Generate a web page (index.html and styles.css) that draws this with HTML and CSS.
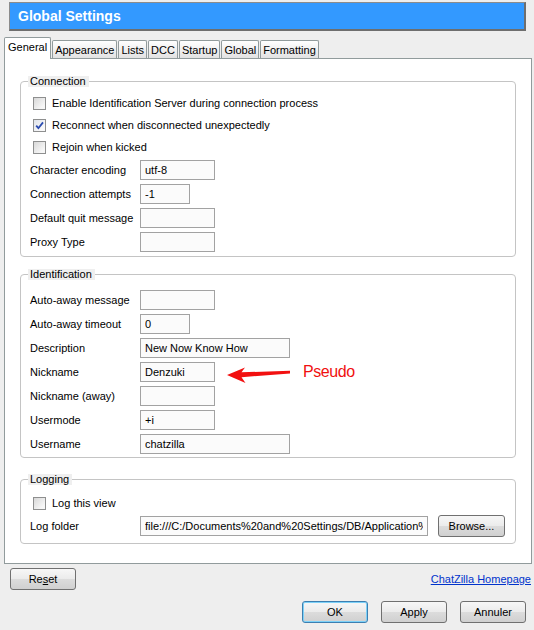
FILE: index.html
```html
<!DOCTYPE html>
<html lang="en">
<head>
  <meta charset="UTF-8" />
  <meta name="viewport" content="width=device-width, initial-scale=1.0" />
  <title>Global Settings</title>
  <link rel="stylesheet" href="styles.css">
</head>
<body>
  <div class="titlebar">Global Settings</div>

  <div class="tabs">
    <span class="tab active">General</span>
    <span class="tab">Appearance</span>
    <span class="tab">Lists</span>
    <span class="tab">DCC</span>
    <span class="tab">Startup</span>
    <span class="tab">Global</span>
    <span class="tab">Formatting</span>
  </div>

  <div class="panel">
    <fieldset class="group">
      <legend>Connection</legend>
      <div class="rows rows-connection">
        <label class="check"><span class="box"></span>Enable Identification Server during connection process</label>
        <label class="check">
          <span class="box checked">
            <svg width="9" height="9" viewBox="0 0 9 9"><path d="M1.2 4.6 L3.4 7.2 L8 1.4" fill="none" stroke="#2a4bb0" stroke-width="1.8"/></svg>
          </span>Reconnect when disconnected unexpectedly
        </label>
        <label class="check"><span class="box"></span>Rejoin when kicked</label>
        <div class="field"><span class="name">Character encoding</span><input class="text w75" value="utf-8"></div>
        <div class="field"><span class="name">Connection attempts</span><input class="text w50" value="-1"></div>
        <div class="field"><span class="name">Default quit message</span><input class="text w75" value=""></div>
        <div class="field"><span class="name">Proxy Type</span><input class="text w75" value=""></div>
      </div>
    </fieldset>

    <fieldset class="group group-ident">
      <legend>Identification</legend>
      <div class="rows rows-ident">
        <div class="field"><span class="name">Auto-away message</span><input class="text w75" value=""></div>
        <div class="field"><span class="name">Auto-away timeout</span><input class="text w50" value="0"></div>
        <div class="field"><span class="name">Description</span><input class="text w150" value="New Now Know How"></div>
        <div class="field nick">
          <span class="name">Nickname</span><input class="text w75" value="Denzuki">
          <!-- red callout pointing at the nickname box -->
          <svg class="arrow" width="64" height="18" viewBox="0 0 64 18">
            <path d="M0 9 L18 1.5 L14.5 6.3 L63 4.8 L63 7.6 L14.5 11.2 L18.5 17 Z" fill="#f21010"/>
          </svg>
          <span class="callout">Pseudo</span>
        </div>
        <div class="field"><span class="name">Nickname (away)</span><input class="text w75" value=""></div>
        <div class="field"><span class="name">Usermode</span><input class="text w75" value="+i"></div>
        <div class="field"><span class="name">Username</span><input class="text w150" value="chatzilla"></div>
      </div>
    </fieldset>

    <fieldset class="group group-log">
      <legend>Logging</legend>
      <div class="rows rows-log">
        <label class="check"><span class="box"></span>Log this view</label>
        <div class="field">
          <span class="name">Log folder</span>
          <input class="text w288" value="file:///C:/Documents%20and%20Settings/DB/Application%20Data/">
          <button class="btn browse">Browse...</button>
        </div>
      </div>
    </fieldset>
  </div>

  <div class="footer-top">
    <button class="btn">Re<u>s</u>et</button>
    <a class="home" href="#">ChatZilla Homepage</a>
  </div>

  <div class="actions">
    <button class="btn default">OK</button>
    <button class="btn">Apply</button>
    <button class="btn">Annuler</button>
  </div>
</body>
</html>
```

FILE: styles.css
```css
body {
  margin: 0;
  font-family: "Liberation Sans", Arial, sans-serif;
  font-size: 11px;
  background-color: #eeeeee;
  color: #000;
}

/* window header */
.titlebar {
  margin: 2px 8px 0 9px;
  height: 26px;
  padding-left: 8px;
  background-color: #3399ff;
  border: 1px solid #8c8c8c;
  border-right: 2px solid #6e6e6e;
  border-bottom: 2px solid #6e6e6e;
  color: #fff;
  font-size: 14px;
  font-weight: bold;
  line-height: 26px;
}

/* tab strip */
.tabs {
  display: flex;
  align-items: flex-end;
  height: 21px;
  margin: 6px 0 0 4px;
}

.tab {
  display: flex;
  align-items: center;
  box-sizing: border-box;
  height: 18px;
  padding: 0 2px;
  margin-right: 1px;
  border: 1px solid #919b9c;
  border-bottom: none;
  border-radius: 2px 2px 0 0;
  background: linear-gradient(#ffffff, #e2e2e2);
}

.tab.active {
  position: relative;
  z-index: 1;
  height: 22px;
  margin-bottom: -1px;
  padding: 0 3px 3px;
  background: #fff;
}

.panel {
  box-sizing: border-box;
  height: 506px;
  margin: 0 2px 0 4px;
  background-color: #fff;
  border: 1px solid #919b9c;
}

/* group boxes */
.group {
  margin: 17px 15px 0 15px;
  padding: 0;
  border: 1px solid #c4c4c4;
  border-radius: 4px;
}

.group legend {
  margin-left: 7px;
  padding: 0 3px 0 2px;
  line-height: 11px;
  background-color: #efefef;
}

.group-ident {
  margin-top: 12px;
}

.group-log {
  margin-top: 16px;
}

.rows {
  padding-left: 9px;
}

.rows-connection {
  padding-top: 5px;
  padding-bottom: 2px;
}

.rows-ident {
  padding-top: 8px;
  padding-bottom: 1px;
}

.rows-log {
  padding-top: 7px;
  padding-bottom: 5px;
}

.check {
  display: flex;
  align-items: center;
  height: 22px;
  padding-left: 3px;
}

.box {
  display: flex;
  align-items: center;
  justify-content: center;
  box-sizing: border-box;
  width: 13px;
  height: 13px;
  margin-right: 6px;
  border: 1px solid #8e8f8f;
  background: linear-gradient(135deg, #d8d8d8, #f7f7f7 80%);
}

.box.checked {
  background: linear-gradient(135deg, #dfe3ea, #f9f9f9 80%);
}

.field {
  display: flex;
  align-items: center;
  height: 24px;
}

.field .name {
  width: 110px;
  flex-shrink: 0;
}

.text {
  box-sizing: border-box;
  height: 20px;
  padding: 0 4px;
  border: 1px solid #a2a2a2;
  background-color: #fbfbfb;
  font-family: inherit;
  font-size: 11px;
  color: #000;
  outline: none;
}

.w50 { width: 50px; }
.w75 { width: 75px; }
.w150 { width: 150px; }
.w288 { width: 288px; }

/* nickname annotation */
.nick {
  position: relative;
}

.arrow {
  position: absolute;
  left: 197px;
  top: 6px;
}

.callout {
  position: absolute;
  left: 273px;
  top: 3px;
  color: #f01010;
  font-size: 16px;
  letter-spacing: -0.4px;
}

/* buttons */
.btn {
  box-sizing: border-box;
  width: 66px;
  height: 22px;
  padding: 0;
  border: 1px solid #707070;
  border-radius: 3px;
  background: linear-gradient(#f7f7f7, #ebebeb 50%, #dcdcdc 51%, #d0d0d0);
  font-family: inherit;
  font-size: 11px;
  color: #000;
}

.btn.browse {
  width: 67px;
  margin-left: 10px;
}

.btn.default {
  border-color: #3c7fb1;
  box-shadow: inset 0 0 0 1px #7dd1f8;
}

.footer-top {
  display: flex;
  align-items: center;
  justify-content: space-between;
  margin: 4px 3px 0 10px;
}

.home {
  color: #0033cc;
  text-decoration: underline;
}

.actions {
  display: flex;
  justify-content: flex-end;
  gap: 13px;
  margin: 11px 8px 0 0;
}
```
